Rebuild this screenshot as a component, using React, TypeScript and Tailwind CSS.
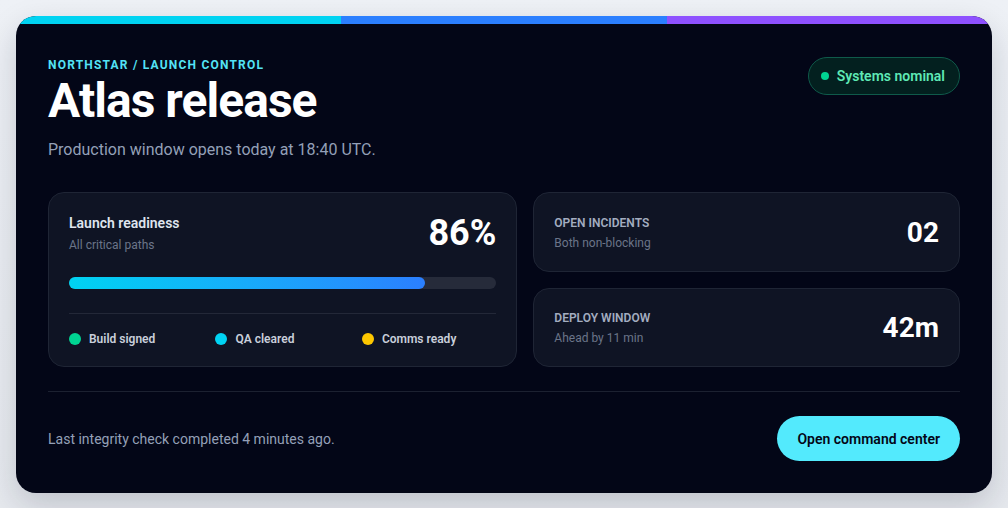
import React from 'react';

const legend = [
  { label: 'Build signed', dot: 'bg-emerald-400' },
  { label: 'QA cleared', dot: 'bg-cyan-400' },
  { label: 'Comms ready', dot: 'bg-yellow-400' },
];

const stats = [
  { label: 'Open incidents', note: 'Both non-blocking', value: '02' },
  { label: 'Deploy window', note: 'Ahead by 11 min', value: '42m' },
];

export default function App() {
  const readiness = 83.4;

  return (
    <div
      className="min-h-[508px] bg-gradient-to-b from-[#eef1f6] to-[#e6e9ee] p-4"
      style={{ fontFamily: 'Roboto, "Noto Sans", sans-serif' }}
    >
      <div className="overflow-hidden rounded-[20px] bg-[#030617] shadow-[0_12px_32px_rgba(15,23,42,0.18)]">
        {/* accent strip */}
        <div className="grid h-2 grid-cols-3">
          <div className="bg-[#00d3f2]" />
          <div className="bg-[#2b7fff]" />
          <div className="bg-[#8e51ff]" />
        </div>

        <div className="px-8 pb-8 pt-[33px]">
          <div className="flex items-start justify-between">
            <div>
              <p className="text-[12px] font-bold uppercase leading-4 tracking-[0.1em] text-[#53e3f5]">
                Northstar / Launch control
              </p>
              <h1 className="mt-1 text-[48px] font-bold leading-[48px] tracking-[-0.02em] text-white">
                Atlas release
              </h1>
              <p className="mt-[13px] text-base leading-6 text-[#94a0b8]">
                Production window opens today at 18:40 UTC.
              </p>
            </div>
            <div className="flex items-center gap-2 rounded-full border border-[#0f5a4a] bg-[#03201f] py-2 pl-3 pr-3.5">
              <span className="h-2 w-2 rounded-full bg-emerald-400" />
              <span className="text-sm font-semibold leading-5 text-[#5ee9b5]">Systems nominal</span>
            </div>
          </div>

          <div className="mt-[30px] grid grid-cols-[1.1fr_1fr] gap-4">
            <div className="rounded-2xl border border-[#1f2535] bg-[#0f1424] px-5 pb-[19px] pt-5">
              <div className="flex items-start justify-between">
                <div>
                  <p className="text-sm font-semibold leading-5 text-[#dfe4ee]">Launch readiness</p>
                  <p className="mt-1 text-xs leading-4 text-[#6b7589]">All critical paths</p>
                </div>
                <p className="text-[36px] font-bold leading-10 text-white">86%</p>
              </div>

              <div className="mt-6 h-3 w-full rounded-full bg-[#262b3a]">
                <div
                  className="h-3 rounded-full bg-gradient-to-r from-[#00d3f2] to-[#2b7fff]"
                  style={{ width: `${readiness}%` }}
                />
              </div>

              <div className="mt-6 grid grid-cols-3 gap-3 border-t border-[#232838] pt-[17px]">
                {legend.map((item) => (
                  <div key={item.label} className="flex items-center gap-2">
                    <span className={`h-3 w-3 rounded-full ${item.dot}`} />
                    <span className="text-xs font-semibold leading-4 text-[#c9cfdb]">{item.label}</span>
                  </div>
                ))}
              </div>
            </div>

            <div className="flex flex-col gap-4">
              {stats.map((s) => (
                <div
                  key={s.label}
                  className="flex flex-1 items-center justify-between rounded-2xl border border-[#1f2535] bg-[#0f1424] px-5 pb-[19px] pt-[21px]"
                >
                  <div>
                    <p className="text-xs font-semibold uppercase leading-4 text-[#a3adc0]">{s.label}</p>
                    <p className="mt-1 text-xs leading-4 text-[#6b7589]">{s.note}</p>
                  </div>
                  <p className="text-[28px] font-bold leading-8 text-white">{s.value}</p>
                </div>
              ))}
            </div>
          </div>

          <div className="mt-6 flex items-center justify-between border-t border-[#1c2131] pt-6">
            <p className="text-sm text-[#94a0b8]">Last integrity check completed 4 minutes ago.</p>
            <button className="h-[45px] rounded-full bg-[#53eafd] px-5 text-sm font-semibold text-[#030617]">
              Open command center
            </button>
          </div>
        </div>
      </div>
    </div>
  );
}
